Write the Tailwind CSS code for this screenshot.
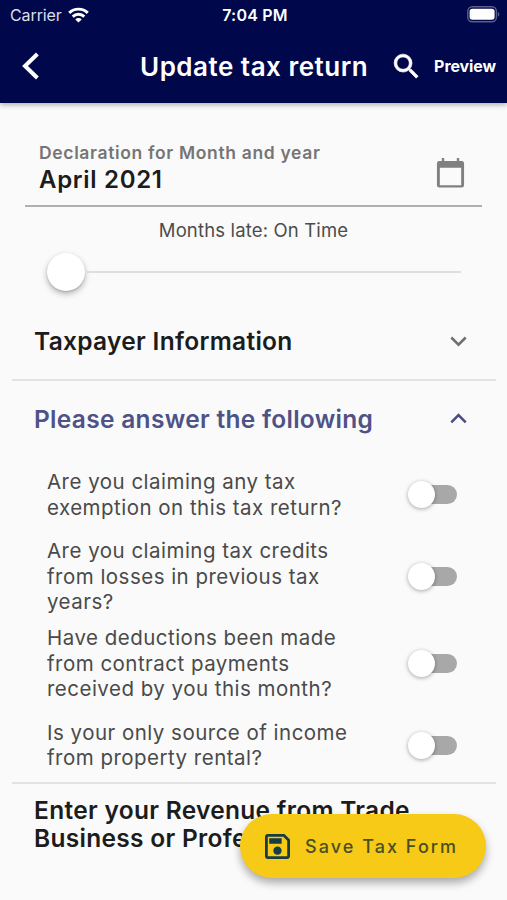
<!DOCTYPE html>
<html lang="en">
<head>
    <meta charset="UTF-8">
    <meta name="viewport" content="width=device-width, initial-scale=1.0">
    <title>Update tax return</title>
    <script src="https://cdn.jsdelivr.net/npm/@tailwindcss/browser@4"></script>
</head>
<body class="bg-[#fafafa] font-['Inter',sans-serif] text-[#1c1c1c]">
    <div class="relative w-[507px] h-[900px] overflow-hidden flex flex-col">
        <header class="h-[103px] shrink-0 bg-[#00084b] text-white shadow-[0_2px_5px_rgba(0,0,0,0.3)]">
            <!-- Status bar -->
            <div class="h-[30px] pl-[10px] pr-[7px] grid grid-cols-3 items-center whitespace-nowrap">
                <div class="flex items-center gap-[6px]">
                    <span class="text-[16px] leading-[30px] tracking-[-0.1px] text-[#dcdeea]">Carrier</span>
                    <svg class="w-[21px] h-[16px] -mt-[1px]" viewBox="0 0 21 16" fill="none" stroke="#fff" stroke-width="2.9">
                        <path d="M1.2 5.9a13.3 13.3 0 0 1 18.6 0" />
                        <path d="M4.7 9.6a8.3 8.3 0 0 1 11.6 0" />
                        <path d="M10.5 15.6 7.3 12.4a4.6 4.6 0 0 1 6.4 0z" fill="#fff" stroke="none" />
                    </svg>
                </div>
                <span class="text-center text-[16px] leading-[30px] font-semibold tracking-[0.2px]">7:04 PM</span>
                <svg class="justify-self-end w-[33px] h-[17px] -mt-[2px]" viewBox="0 0 33 17">
                    <rect x="0.8" y="0.8" width="28.6" height="15" rx="4.5" fill="none" stroke="#595e8a" stroke-width="1.4" />
                    <rect x="2.6" y="2.8" width="25" height="11" rx="2.8" fill="#fff" />
                    <path d="M30.8 5.8c2 .7 2 4.3 0 5z" fill="#595e8a" />
                </svg>
            </div>
            <!-- App bar -->
            <div class="h-[72px] pl-[22px] pr-[11px] flex items-center whitespace-nowrap">
                <svg class="w-[18px] h-[28px]" viewBox="0 0 18 28" fill="none" stroke="#fff" stroke-width="4">
                    <path d="M15.4 2 3 14l12.4 12" />
                </svg>
                <h1 class="ml-[100px] w-[230px] text-[26px] font-semibold tracking-[0.5px]">Update tax return</h1>
                <svg class="ml-[20px] w-[33px] h-[33px]" viewBox="0 0 24 24" fill="#fff" stroke="#fff" stroke-width="0.5">
                    <path d="M15.5 14h-.79l-.28-.27A6.47 6.47 0 0 0 16 9.5 6.5 6.5 0 1 0 9.5 16c1.61 0 3.09-.59 4.23-1.57l.27.28v.79l5 4.99L20.49 19l-4.99-5zm-6 0C7.01 14 5 11.99 5 9.5S7.01 5 9.5 5 14 7.01 14 9.5 11.99 14 9.5 14z" />
                </svg>
                <span class="ml-auto text-[16px] font-bold tracking-[-0.1px]">Preview</span>
            </div>
        </header>

        <main class="flex flex-col">
            <!-- Month picker -->
            <div class="mx-[25px] h-[104px] pt-[38px] pl-[14px] pr-[17px] flex justify-between border-b-2 border-[#b0b0b0] whitespace-nowrap">
                <div>
                    <p class="text-[17.5px] leading-[24px] font-semibold tracking-[0.65px] text-[#757575]">Declaration for Month and year</p>
                    <p class="text-[24px] leading-[30px] font-semibold tracking-[0.7px]">April 2021</p>
                </div>
                <svg class="mt-[17px] w-[29px] h-[31px]" viewBox="0 0 29 32">
                    <path d="M5.5 0h2.5v3h13V0h2.5v3h2.5a2.5 2.5 0 0 1 2.5 2.5v22.5a2.5 2.5 0 0 1-2.5 2.5h-23a2.5 2.5 0 0 1-2.5-2.5v-22.5A2.5 2.5 0 0 1 3 3h2.5zM3.5 10v18h22V10z" fill="#808080" fill-rule="evenodd" />
                </svg>
            </div>

            <p class="h-[46px] pt-[10px] text-center text-[18.5px] leading-[27px] tracking-[0.15px] text-[#4c4c4c] whitespace-nowrap">Months late: On Time</p>

            <!-- Slider -->
            <div class="h-[38px] ml-[47px] mr-[46px] flex items-center">
                <div class="size-[38px] shrink-0 rounded-full bg-white shadow-[0_3px_6px_rgba(0,0,0,0.28),0_1px_2px_rgba(0,0,0,0.15)]"></div>
                <div class="h-[2px] grow bg-[#dedede]"></div>
            </div>

            <!-- Sections -->
            <div class="mt-[10px] ml-[12px] mr-[11px] h-[80px] pt-[2px] pl-[22px] pr-[29px] flex items-center justify-between border-b-2 border-[#e2e2e2]">
                <h2 class="text-[24.5px] font-semibold tracking-[0.3px] whitespace-nowrap">Taxpayer Information</h2>
                <svg class="w-[17px] h-[11px]" viewBox="0 0 17 11" fill="none" stroke="#6f6f6f" stroke-width="2.5">
                    <path d="M1.3 1.5 8.5 8.7 15.7 1.5" />
                </svg>
            </div>
            <div class="ml-[12px] mr-[11px] h-[76px] pl-[22px] pr-[29px] flex items-center justify-between">
                <h2 class="text-[24.5px] font-semibold tracking-[0.3px] text-[#4f5287] whitespace-nowrap">Please answer the following</h2>
                <svg class="w-[17px] h-[11px] -mt-[1px]" viewBox="0 0 17 11" fill="none" stroke="#4a4c83" stroke-width="2.5">
                    <path d="M1.3 9.3 8.5 2.1 15.7 9.3" />
                </svg>
            </div>

            <div class="ml-[12px] mr-[11px] pt-[12px] pb-[11px] pl-[35px] pr-[39px] border-b-2 border-[#e2e2e2] text-[20.5px] leading-[25.6px] tracking-[0.48px] text-[#4a4a4a] whitespace-nowrap">
                <div class="flex items-center justify-between">
                    <p>Are you claiming any tax<br>exemption on this tax return?</p>
                    <div class="w-[49px] h-[27px] flex items-center">
                        <div class="size-[27px] shrink-0 z-10 rounded-full bg-white shadow-[0_1px_4px_rgba(0,0,0,0.35)]"></div>
                        <div class="-ml-[18px] w-[40px] h-[19px] rounded-full bg-[#a8a8a8]"></div>
                    </div>
                </div>
                <div class="mt-[18px] flex items-center justify-between">
                    <p>Are you claiming tax credits<br>from losses in previous tax<br>years?</p>
                    <div class="w-[49px] h-[27px] flex items-center">
                        <div class="size-[27px] shrink-0 z-10 rounded-full bg-white shadow-[0_1px_4px_rgba(0,0,0,0.35)]"></div>
                        <div class="-ml-[18px] w-[40px] h-[19px] rounded-full bg-[#a8a8a8]"></div>
                    </div>
                </div>
                <div class="mt-[10px] flex items-center justify-between">
                    <p>Have deductions been made<br>from contract payments<br>received by you this month?</p>
                    <div class="w-[49px] h-[27px] flex items-center">
                        <div class="size-[27px] shrink-0 z-10 rounded-full bg-white shadow-[0_1px_4px_rgba(0,0,0,0.35)]"></div>
                        <div class="-ml-[18px] w-[40px] h-[19px] rounded-full bg-[#a8a8a8]"></div>
                    </div>
                </div>
                <div class="mt-[18px] flex items-center justify-between">
                    <p>Is your only source of income<br>from property rental?</p>
                    <div class="w-[49px] h-[27px] flex items-center">
                        <div class="size-[27px] shrink-0 z-10 rounded-full bg-white shadow-[0_1px_4px_rgba(0,0,0,0.35)]"></div>
                        <div class="-ml-[18px] w-[40px] h-[19px] rounded-full bg-[#a8a8a8]"></div>
                    </div>
                </div>
            </div>

            <h2 class="mt-[12px] ml-[34px] text-[24.5px] leading-[28.5px] font-semibold tracking-[0.3px] whitespace-nowrap">Enter your Revenue from Trade<br>Business or Profession</h2>
        </main>

        <!-- Floating save button -->
        <button class="absolute z-20 left-[240px] top-[814px] w-[246px] h-[64px] pl-[25px] flex items-center rounded-full bg-[#f6ca16] shadow-[0_5px_9px_rgba(0,0,0,0.32)] whitespace-nowrap">
            <svg class="w-[25px] h-[25px]" viewBox="3 3 18 18" fill="#173c43">
                <path d="M21 7v12c0 1.1-.9 2-2 2H5c-1.11 0-2-.9-2-2V5c0-1.1.89-2 2-2h12l4 4zm-2 .83L16.17 5H5v14h14V7.83zM12 12c-1.66 0-3 1.34-3 3s1.34 3 3 3 3-1.34 3-3-1.34-3-3-3zM6 6h9v4H6z" />
            </svg>
            <span class="ml-[15px] text-[18px] font-medium tracking-[2.05px] text-[#4a4f24]">Save Tax Form</span>
        </button>
    </div>
</body>
</html>
